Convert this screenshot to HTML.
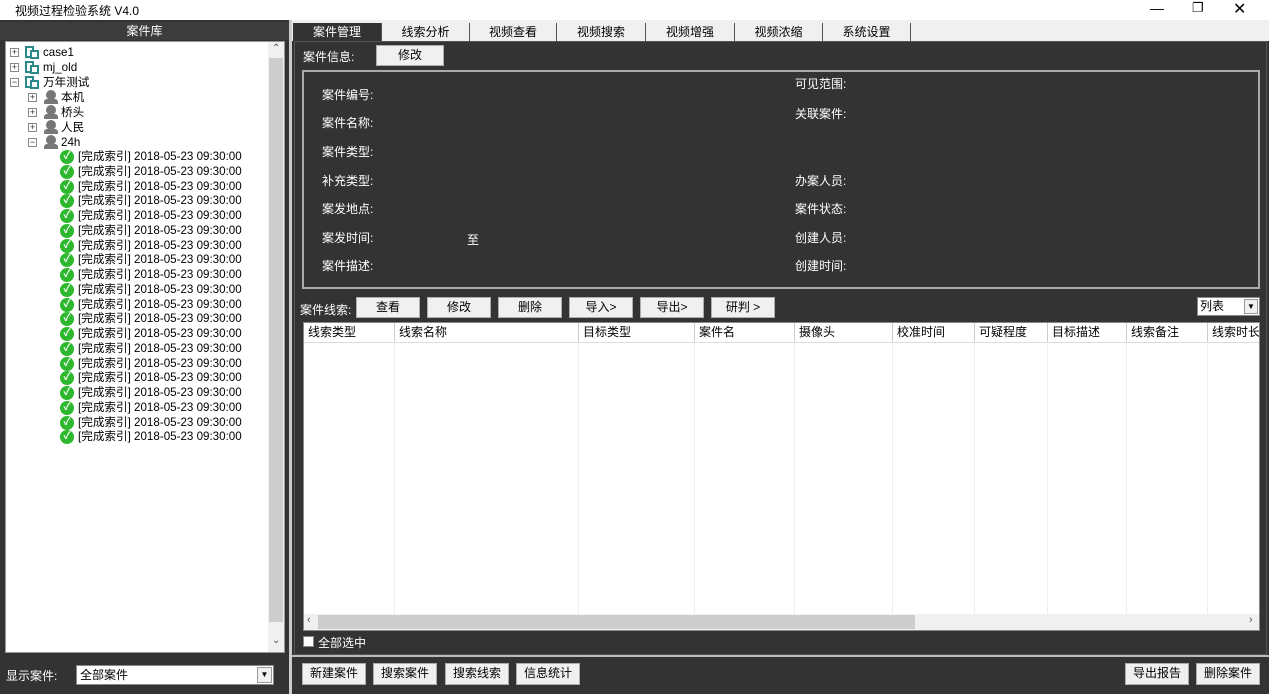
<!DOCTYPE html><html><head><meta charset="utf-8"><style>
*{margin:0;padding:0;box-sizing:border-box}
body{width:1269px;height:694px;position:relative;overflow:hidden;background:#fff;font-family:"Liberation Sans","Noto Sans CJK SC",sans-serif;font-size:12px;color:#000}
.a{position:absolute}
.w{color:#fff}
.btn{position:absolute;background:#f0f0f0;border:1px solid #adadad;text-align:center;line-height:19px;font-size:12px;color:#000}
.tab{position:absolute;top:23px;height:18px;line-height:18px;text-align:center;background:#f0f0f0;border-right:1px solid #555;font-size:12px}
.tr{position:absolute;height:15px;line-height:15px;font-size:11.6px;white-space:nowrap}
.th{position:absolute;top:323px;height:19px;line-height:19px;padding-left:4px;border-right:1px solid #ccc;background:#fff;white-space:nowrap;overflow:hidden}
.vl{position:absolute;top:342px;height:272px;width:1px;background:#eee}
.lb{position:absolute;color:#fff;font-size:12px}
</style></head><body>
<div class="a" style="left:15px;top:2px;font-size:12px">视频过程检验系统 V4.0</div>
<div class="a" style="left:1150px;top:0;font-size:14px">—</div>
<div class="a" style="left:1192px;top:0;font-size:13px">❐</div>
<div class="a" style="left:1233px;top:-1px;font-size:16px">✕</div>
<!-- left -->
<div class="a" style="left:0;top:20px;width:289px;height:674px;background:#333"></div>
<div class="a w" style="left:0;top:22px;width:289px;height:18px;line-height:18px;text-align:center;background:#3c3c3c">案件库</div>
<div class="a" style="left:5px;top:41px;width:280px;height:612px;background:#fff;border:1px solid #999"></div>
<div class="a" style="left:268px;top:42px;width:16px;height:610px;background:#f0f0f0"></div>
<div class="a" style="left:269px;top:58px;width:14px;height:564px;background:#cdcdcd"></div>
<div class="a" style="left:272px;top:43px;font-size:10px;color:#555">⌃</div>
<div class="a" style="left:272px;top:635px;font-size:10px;color:#555">⌄</div>
<div id="tree"></div>
<div class="lb" style="left:6px;top:667px">显示案件:</div>
<div class="a" style="left:76px;top:665px;width:198px;height:20px;background:#fff;border:1px solid #888;line-height:18px;padding-left:3px">全部案件</div>
<div class="a" style="left:257px;top:667px;width:15px;height:16px;background:#f0f0f0;border:1px solid #999;font-size:8px;text-align:center;line-height:14px">▼</div>
<div class="a" style="left:289px;top:20px;width:3px;height:674px;background:#ccc"></div>
<!-- right -->
<div class="a" style="left:292px;top:20px;width:977px;height:674px;background:#333"></div>
<div class="a" style="left:292px;top:20px;width:977px;height:21px;background:#f0f0f0"></div>
<div class="tab w" style="left:293px;width:89px;background:#333">案件管理</div>
<div class="tab" style="left:382px;width:88px">线索分析</div>
<div class="tab" style="left:470px;width:87px">视频查看</div>
<div class="tab" style="left:557px;width:89px">视频搜索</div>
<div class="tab" style="left:646px;width:89px">视频增强</div>
<div class="tab" style="left:735px;width:88px">视频浓缩</div>
<div class="tab" style="left:823px;width:88px">系统设置</div>
<div class="a" style="left:294px;top:41px;width:973px;height:614px;border:1px solid #555"></div>
<div class="lb" style="left:303px;top:48px">案件信息:</div>
<div class="btn" style="left:376px;top:45px;width:68px;height:21px">修改</div>
<div class="a" style="left:302px;top:70px;width:958px;height:219px;border:2px solid #aaa"></div>
<div class="lb" style="left:322px;top:86px">案件编号:</div>
<div class="lb" style="left:322px;top:114px">案件名称:</div>
<div class="lb" style="left:322px;top:143px">案件类型:</div>
<div class="lb" style="left:322px;top:172px">补充类型:</div>
<div class="lb" style="left:322px;top:200px">案发地点:</div>
<div class="lb" style="left:322px;top:229px">案发时间:</div>
<div class="lb" style="left:467px;top:231px">至</div>
<div class="lb" style="left:322px;top:257px">案件描述:</div>
<div class="lb" style="left:795px;top:75px">可见范围:</div>
<div class="lb" style="left:795px;top:105px">关联案件:</div>
<div class="lb" style="left:795px;top:172px">办案人员:</div>
<div class="lb" style="left:795px;top:200px">案件状态:</div>
<div class="lb" style="left:795px;top:229px">创建人员:</div>
<div class="lb" style="left:795px;top:257px">创建时间:</div>
<div class="lb" style="left:300px;top:301px">案件线索:</div>
<div class="btn" style="left:356px;top:297px;width:64px;height:21px">查看</div>
<div class="btn" style="left:427px;top:297px;width:64px;height:21px">修改</div>
<div class="btn" style="left:498px;top:297px;width:64px;height:21px">删除</div>
<div class="btn" style="left:569px;top:297px;width:64px;height:21px">导入&gt;</div>
<div class="btn" style="left:640px;top:297px;width:64px;height:21px">导出&gt;</div>
<div class="btn" style="left:711px;top:297px;width:64px;height:21px">研判 &gt;</div>
<div class="a" style="left:1197px;top:297px;width:63px;height:19px;background:#fff;border:1px solid #888;line-height:17px;padding-left:2px">列表</div>
<div class="a" style="left:1244px;top:299px;width:14px;height:15px;background:#f0f0f0;border:1px solid #999;font-size:8px;text-align:center;line-height:13px">▼</div>
<div class="a" style="left:303px;top:322px;width:957px;height:309px;background:#fff;border:1px solid #888"></div>
<div class="th" style="left:304px;width:91px">线索类型</div>
<div class="th" style="left:395px;width:184px">线索名称</div>
<div class="th" style="left:579px;width:116px">目标类型</div>
<div class="th" style="left:695px;width:100px">案件名</div>
<div class="th" style="left:795px;width:98px">摄像头</div>
<div class="th" style="left:893px;width:82px">校准时间</div>
<div class="th" style="left:975px;width:73px">可疑程度</div>
<div class="th" style="left:1048px;width:79px">目标描述</div>
<div class="th" style="left:1127px;width:81px">线索备注</div>
<div class="th" style="left:1208px;width:51px;border-right:none">线索时长</div>
<div class="a" style="left:304px;top:342px;width:955px;height:1px;background:#ddd"></div>
<div class="vl" style="left:394px"></div><div class="vl" style="left:578px"></div><div class="vl" style="left:694px"></div><div class="vl" style="left:794px"></div><div class="vl" style="left:892px"></div><div class="vl" style="left:974px"></div><div class="vl" style="left:1047px"></div><div class="vl" style="left:1126px"></div><div class="vl" style="left:1207px"></div>
<div class="a" style="left:304px;top:614px;width:955px;height:16px;background:#f0f0f0"></div>
<div class="a" style="left:318px;top:615px;width:597px;height:14px;background:#cdcdcd"></div>
<div class="a" style="left:307px;top:614px;font-size:11px;color:#555">‹</div>
<div class="a" style="left:1249px;top:614px;font-size:11px;color:#555">›</div>
<div class="a" style="left:303px;top:636px;width:11px;height:11px;background:#fff;border:1px solid #888"></div>
<div class="lb" style="left:318px;top:634px">全部选中</div>
<div class="a" style="left:292px;top:655px;width:977px;height:2px;background:#bbb"></div>
<div class="btn" style="left:302px;top:663px;width:64px;height:22px">新建案件</div>
<div class="btn" style="left:373px;top:663px;width:64px;height:22px">搜索案件</div>
<div class="btn" style="left:445px;top:663px;width:64px;height:22px">搜索线索</div>
<div class="btn" style="left:516px;top:663px;width:64px;height:22px">信息统计</div>
<div class="btn" style="left:1125px;top:663px;width:64px;height:22px">导出报告</div>
<div class="btn" style="left:1196px;top:663px;width:64px;height:22px">删除案件</div>
<script>
var t=document.getElementById('tree'),h='';
function box(x,y,m){return '<div class="a" style="left:'+x+'px;top:'+(y+3)+'px;width:9px;height:9px;border:1px solid #888;font-size:9px;line-height:7px;text-align:center;color:#333">'+m+'</div>';}
function fold(x,y){return '<div class="a" style="left:'+x+'px;top:'+(y+1)+'px;width:9px;height:12px;border:2px solid #2a8a8a"></div><div class="a" style="left:'+(x+5)+'px;top:'+(y+5)+'px;width:9px;height:9px;border:2px solid #2a8a8a;background:#fff"></div>';}
function cam(x,y){return '<div class="a" style="left:'+(x+2)+'px;top:'+y+'px;width:10px;height:10px;border-radius:50%;background:#777"></div><div class="a" style="left:'+x+'px;top:'+(y+9)+'px;width:14px;height:5px;border-radius:3px 3px 0 0;background:#777"></div>';}
var names=['case1','mj_old','万年测试'];
for(var i=0;i<3;i++){var y=45+i*15;h+=box(10,y,i==2?'−':'+')+fold(25,y)+'<div class="tr" style="left:43px;top:'+y+'px">'+names[i]+'</div>';}
var sub=['本机','桥头','人民','24h'];
for(var i=0;i<4;i++){var y=90+i*15;h+=box(28,y,i==3?'−':'+')+cam(44,y)+'<div class="tr" style="left:61px;top:'+y+'px">'+sub[i]+'</div>';}
for(var i=0;i<20;i++){var y=149+i*14.75;h+='<div class="a" style="left:60px;top:'+(y+1)+'px;width:14px;height:14px;border-radius:50%;background:#2db82d;color:#fff;font-size:10px;line-height:14px;text-align:center;font-weight:bold">✓</div><div class="tr" style="left:78px;top:'+y+'px">[完成索引] 2018-05-23 09:30:00</div>';}
t.innerHTML=h;
</script>
</body></html>
